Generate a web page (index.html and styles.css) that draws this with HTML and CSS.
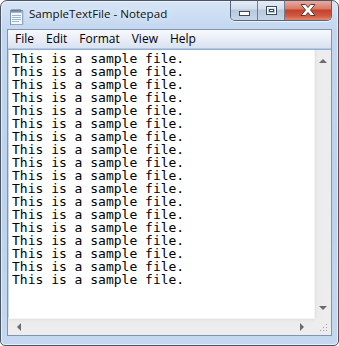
FILE: index.html
```html
<!DOCTYPE html>
<html lang="en">
<head>
  <meta charset="UTF-8" />
  <title>SampleTextFile - Notepad</title>
  <link rel="stylesheet" href="styles.css">
</head>
<body>
  <div class="window">
    <div class="titlebar">
      <svg class="app-icon" width="16" height="17" viewBox="0 0 16 17">
        <rect x="1.5" y="2.5" width="12" height="14" fill="#f4f8fc" stroke="#7d93ad"/>
        <rect x="2" y="3" width="11" height="2" fill="#9fb6cf"/>
        <path d="M3 1v3M5 1v3M7 1v3M9 1v3M11 1v3" stroke="#5d6f86" stroke-width="1"/>
        <path d="M3 7.5h9M3 9.5h9M3 11.5h9M3 13.5h7" stroke="#9db4d0" stroke-width="1"/>
        <path d="M14 3v14H2" stroke="#aabbd0" fill="none"/>
      </svg>
      <span class="title">SampleTextFile - Notepad</span>
      <div class="caption-buttons">
        <div class="cap-btn min">
          <svg width="11" height="5" viewBox="0 0 11 5"><rect x="0.5" y="0.5" width="10" height="4" fill="#fff" stroke="#3d4a5c"/></svg>
        </div>
        <div class="cap-btn max">
          <svg width="11" height="9" viewBox="0 0 11 9"><rect x="0.5" y="0.5" width="10" height="8" fill="none" stroke="#3d4a5c"/><rect x="1.5" y="1.5" width="8" height="6" fill="none" stroke="#fff"/><rect x="3.5" y="3.5" width="4" height="2" fill="#fff" stroke="#3d4a5c"/></svg>
        </div>
        <div class="cap-btn close">
          <svg width="16" height="12" viewBox="0 0 16 12"><path d="M1 0.5h4.5L8 3.5l2.5-3H15L10.5 6l4.5 5.5h-4.5L8 8.5l-2.5 3H1L5.5 6z" fill="#fff" stroke="#5b3a36" stroke-width="1" stroke-linejoin="round"/></svg>
        </div>
      </div>
    </div>
    <div class="client">
      <div class="menubar">
        <span class="menu-item">File</span>
        <span class="menu-item">Edit</span>
        <span class="menu-item">Format</span>
        <span class="menu-item">View</span>
        <span class="menu-item">Help</span>
      </div>
      <div class="editor">
        <div class="text">This is a sample file.
This is a sample file.
This is a sample file.
This is a sample file.
This is a sample file.
This is a sample file.
This is a sample file.
This is a sample file.
This is a sample file.
This is a sample file.
This is a sample file.
This is a sample file.
This is a sample file.
This is a sample file.
This is a sample file.
This is a sample file.
This is a sample file.
This is a sample file.</div>
        <div class="vscroll">
          <span class="arrow up"></span>
          <span class="arrow down"></span>
        </div>
        <div class="hscroll">
          <span class="arrow left"></span>
          <span class="arrow right"></span>
        </div>
        <div class="grip">
          <svg width="10" height="10" viewBox="0 0 10 10" fill="#9aa3ad">
            <rect x="7" y="1" width="1" height="1"/>
            <rect x="4" y="4" width="1" height="1"/><rect x="7" y="4" width="1" height="1"/>
            <rect x="1" y="7" width="1" height="1"/><rect x="4" y="7" width="1" height="1"/><rect x="7" y="7" width="1" height="1"/>
          </svg>
        </div>
      </div>
    </div>
  </div>
</body>
</html>
```

FILE: styles.css
```css
html, body {
  margin: 0;
  background: #ffffff;
}

.window {
  width: 339px;
  height: 346px;
  box-sizing: border-box;
  border: 1px solid #4b5563;
  border-radius: 7px 7px 5px 5px;
  background: linear-gradient(#d6e5f6, #c2d6ef 30px, #bcd2ed 200px, #c4d8ef);
  box-shadow: inset 0 0 0 1px rgba(255, 255, 255, 0.55);
  padding: 0 6px 9px 6px;
  display: flex;
  flex-direction: column;
  font-family: "Segoe UI", "Open Sans", sans-serif;
  overflow: hidden;
}

.titlebar {
  height: 28px;
  display: flex;
  align-items: flex-start;
}

.app-icon {
  margin: 7px 0 0 2px;
  flex: none;
}

.title {
  margin: 5px 0 0 4px;
  font-size: 11.6px;
  color: #111;
  text-shadow: 0 0 6px rgba(255, 255, 255, 0.9);
}

.caption-buttons {
  margin: -1px 0 0 auto;
  display: flex;
  height: 20px;
  border: 1px solid #56657b;
  border-top: none;
  border-radius: 0 0 5px 5px;
  overflow: hidden;
  box-shadow: 0 1px 0 rgba(255, 255, 255, 0.6);
}

.cap-btn {
  display: flex;
  align-items: center;
  justify-content: center;
  height: 20px;
}

.cap-btn.min,
.cap-btn.max {
  width: 26px;
  background: linear-gradient(#e6edf6, #d3dfed 45%, #b9c9dd 50%, #c6d5e7);
  border-right: 1px solid #6e7d92;
}

.cap-btn.min svg {
  margin-top: 6px;
}

.cap-btn.close {
  width: 46px;
  background: linear-gradient(#eab3a6, #d87866 45%, #c5412c 50%, #cf5a42 80%, #e38a70);
}

.client {
  flex: 1;
  display: flex;
  flex-direction: column;
  border: 1px solid #7f96b3;
  background: #fff;
  min-height: 0;
}

.menubar {
  height: 18px;
  display: flex;
  align-items: center;
  padding-left: 1px;
  background: linear-gradient(#f7f9fc, #e6ecf6 60%, #d9e2f1);
  border-bottom: 1px solid #b9c7da;
  font-size: 12px;
  color: #000;
}

.menu-item {
  padding: 0 6px;
  line-height: 18px;
}

.editor {
  flex: 1;
  display: grid;
  grid-template-columns: 1fr 17px;
  grid-template-rows: 1fr 17px;
  min-height: 0;
  border-top: 1px solid #8fb0d6;
}

.text {
  margin: 0;
  padding: 2px 0 0 3px;
  white-space: pre;
  font-family: "DejaVu Sans Mono", monospace;
  font-size: 13px;
  line-height: 13px;
  color: #000;
  overflow: hidden;
  border-left: 1px solid #c9d6e6;
}

.vscroll {
  background: linear-gradient(90deg, #e3e3e3, #ececec 3px, #ededed);
  border-left: 1px solid #f4f4f4;
  display: flex;
  flex-direction: column;
  justify-content: space-between;
  align-items: center;
  padding: 9px 0 8px;
}

.hscroll {
  background: linear-gradient(#e3e3e3, #ececec 3px, #ededed);
  border-top: 1px solid #f4f4f4;
  display: flex;
  justify-content: space-between;
  align-items: center;
  padding: 0 10px 0 9px;
}

.grip {
  background: #ededed;
  display: flex;
  align-items: flex-end;
  justify-content: flex-end;
  padding: 0 2px 2px 0;
}

.arrow {
  width: 0;
  height: 0;
  border: 4px solid transparent;
}

.arrow.up {
  border-top: none;
  border-bottom: 4px solid #6b6b6b;
}

.arrow.down {
  border-bottom: none;
  border-top: 4px solid #6b6b6b;
}

.arrow.left {
  border-left: none;
  border-right: 4px solid #6b6b6b;
}

.arrow.right {
  border-right: none;
  border-left: 4px solid #6b6b6b;
}
```
